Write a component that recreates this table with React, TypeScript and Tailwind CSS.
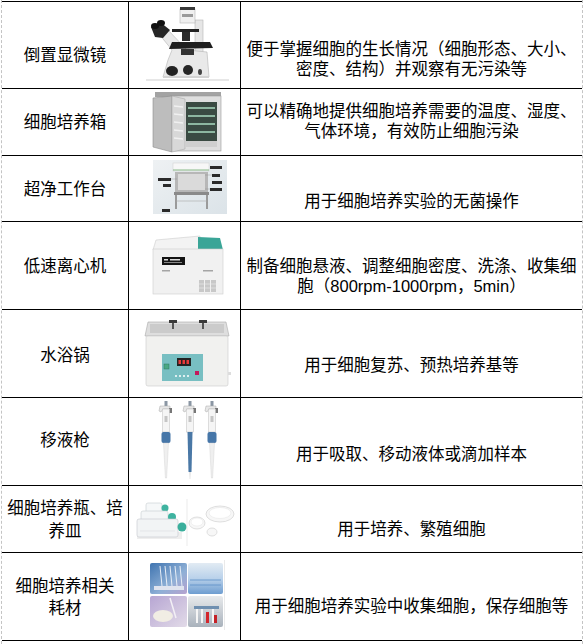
import React from 'react';

type Row = {
  top: number;
  h: number;
  rowClass: string;
  name: string[];
  nameClass: string;
  desc: string[];
  descClass: string;
  Pic: React.FC;
};

const Microscope: React.FC = () => (
  <g>
    <line x1="146" y1="80" x2="229" y2="80" stroke="#cfcfcf" strokeWidth="1.2" />
    <rect x="195" y="20" width="8" height="56" fill="#e6e6e6" stroke="#b5b5b5" strokeWidth="0.6" />
    <rect x="180" y="9" width="15" height="14" fill="#f0f0f0" stroke="#b5b5b5" strokeWidth="0.6" />
    <rect x="180" y="7" width="15" height="3" fill="#3a3a3a" />
    <rect x="182" y="14" width="11" height="3" fill="#9a9a9a" />
    <rect x="172" y="29" width="27" height="3" fill="#222" />
    <rect x="182" y="32" width="8" height="9" fill="#2b2b2b" />
    <polygon points="159,34 168,30 187,50 207,52 209,77 163,77 168,60 172,50" fill="#e9e9e9" stroke="#b3b3b3" strokeWidth="0.6" />
    <polygon points="172,42 210,42 213,48 169,49" fill="#1e1e1e" />
    <polygon points="151,27 160,22 170,30 163,38 155,37" fill="#262626" />
    <ellipse cx="155" cy="26" rx="4" ry="3" fill="#111" />
    <ellipse cx="161" cy="23" rx="4" ry="3" fill="#111" />
    <rect x="181" y="49" width="13" height="6" fill="#333" />
    <ellipse cx="172" cy="71" rx="6" ry="5" fill="#222" />
    <ellipse cx="188" cy="70" rx="5" ry="5" fill="#262626" />
    <ellipse cx="200" cy="72" rx="2" ry="3" fill="#444" />
    <rect x="163" y="76" width="46" height="2" fill="#d3d3d3" />
  </g>
);

const Incubator: React.FC = () => (
  <g>
    <rect x="155" y="92" width="66" height="5" fill="#a3a3a3" />
    <rect x="170" y="96" width="51" height="55" fill="#dedede" stroke="#9a9a9a" strokeWidth="0.6" />
    <rect x="186" y="102" width="31" height="39" fill="#3a4a42" />
    <line x1="188" y1="108" x2="215" y2="108" stroke="#a3d1b8" strokeWidth="1.6" />
    <line x1="188" y1="116" x2="215" y2="116" stroke="#a3d1b8" strokeWidth="1.6" />
    <line x1="188" y1="124" x2="215" y2="124" stroke="#a3d1b8" strokeWidth="1.6" />
    <line x1="188" y1="132" x2="215" y2="132" stroke="#a3d1b8" strokeWidth="1.6" />
    <rect x="186" y="141" width="31" height="6" fill="#cfcfcf" />
    <polygon points="153,98 172,96 172,152 153,147" fill="#bdbdbd" stroke="#8d8d8d" strokeWidth="0.6" />
    <polygon points="172,96 185,99 185,149 172,152" fill="#d8d8d8" stroke="#a0a0a0" strokeWidth="0.5" />
    <line x1="174" y1="106" x2="183" y2="107" stroke="#f0f0f0" strokeWidth="1.4" />
    <line x1="174" y1="114" x2="183" y2="115" stroke="#f0f0f0" strokeWidth="1.4" />
    <line x1="174" y1="122" x2="183" y2="123" stroke="#f0f0f0" strokeWidth="1.4" />
    <line x1="174" y1="130" x2="183" y2="131" stroke="#f0f0f0" strokeWidth="1.4" />
    <line x1="174" y1="138" x2="183" y2="139" stroke="#f0f0f0" strokeWidth="1.4" />
  </g>
);

const Tag: React.FC<{ x: number; y: number; w: number }> = ({ x, y, w }) => (
  <rect x={x} y={y} width={w} height="3" fill="#2a2a2a" />
);

const CleanBench: React.FC = () => (
  <g>
    <defs>
      <linearGradient id="cb" x1="0" y1="0" x2="1" y2="1">
        <stop offset="0" stopColor="#eef1f3" />
        <stop offset="1" stopColor="#dbe3e8" />
      </linearGradient>
    </defs>
    <rect x="153" y="160" width="74" height="54" fill="url(#cb)" />
    <rect x="173" y="163" width="36" height="8" fill="#f7f7f7" stroke="#d0d0d0" strokeWidth="0.5" />
    <line x1="173" y1="170" x2="209" y2="170" stroke="#6aa86a" strokeWidth="0.8" />
    <rect x="175" y="172" width="33" height="20" fill="#b7b7b7" />
    <rect x="178" y="174" width="27" height="16" fill="#dadada" />
    <rect x="174" y="192" width="35" height="3" fill="#8a8a8a" />
    <rect x="175" y="195" width="2" height="14" fill="#9a9a9a" />
    <rect x="206" y="195" width="2" height="14" fill="#9a9a9a" />
    <line x1="176" y1="201" x2="207" y2="201" stroke="#aaa" strokeWidth="0.6" />
    <Tag x={210} y={166} w={12} />
    <Tag x={212} y={174} w={8} />
    <Tag x={212} y={181} w={10} />
    <Tag x={210} y={188} w={12} />
    <Tag x={158} y={178} w={13} />
    <Tag x={163} y={184} w={8} />
    <Tag x={162} y={209} w={8} />
    <line x1="171" y1="179" x2="177" y2="179" stroke="#888" strokeWidth="0.4" />
    <line x1="205" y1="175" x2="212" y2="175" stroke="#888" strokeWidth="0.4" />
    <line x1="205" y1="189" x2="210" y2="189" stroke="#888" strokeWidth="0.4" />
  </g>
);

const Centrifuge: React.FC = () => (
  <g>
    <polygon points="156,240 200,236 200,250 153,250" fill="#f3f3f3" stroke="#cdcdcd" strokeWidth="0.6" />
    <polygon points="198,237 220,238 223,250 198,250" fill="#3aa597" />
    <rect x="153" y="249" width="70" height="45" fill="#f1f1f1" stroke="#cdcdcd" strokeWidth="0.6" />
    <rect x="162" y="257" width="23" height="8" fill="#141414" />
    <rect x="164" y="259" width="4" height="1.5" fill="#ddd" />
    <rect x="170" y="259" width="10" height="1.5" fill="#ddd" />
    <rect x="164" y="262" width="18" height="1" fill="#888" />
    <rect x="162" y="270" width="8" height="1.5" fill="#a5a5a5" />
    <rect x="203" y="270" width="10" height="1.5" fill="#a5a5a5" />
    <rect x="199" y="280" width="5" height="12" fill="#c8c8c8" />
    <rect x="205" y="280" width="5" height="12" fill="#c8c8c8" />
    <rect x="211" y="280" width="5" height="12" fill="#c8c8c8" />
    <line x1="199" y1="284" x2="216" y2="284" stroke="#eee" strokeWidth="0.6" />
    <line x1="199" y1="288" x2="216" y2="288" stroke="#eee" strokeWidth="0.6" />
  </g>
);

const WaterBath: React.FC = () => (
  <g>
    <polygon points="148,322 226,322 229,336 145,336" fill="#dedede" stroke="#a9a9a9" strokeWidth="0.6" />
    <rect x="150" y="324" width="74" height="9" fill="#cbcbcb" />
    <rect x="172" y="322" width="2" height="7" fill="#555" />
    <rect x="169" y="320" width="8" height="3" fill="#3a3a3a" />
    <rect x="202" y="322" width="2" height="7" fill="#555" />
    <rect x="199" y="320" width="8" height="3" fill="#3a3a3a" />
    <rect x="146" y="336" width="82" height="50" rx="2" fill="#f1f1ef" stroke="#c9c9c9" strokeWidth="0.6" />
    <rect x="162" y="354" width="41" height="27" fill="#78bfc2" />
    <rect x="177" y="358" width="14" height="8" fill="#232323" />
    <rect x="178.5" y="360" width="2.5" height="4" fill="#e53a3a" />
    <rect x="182.5" y="360" width="2.5" height="4" fill="#e53a3a" />
    <rect x="186.5" y="360" width="2.5" height="4" fill="#e53a3a" />
    <rect x="164" y="364" width="5" height="5" fill="#4aa884" stroke="#2d7760" strokeWidth="0.5" />
    <rect x="195" y="371" width="4" height="4" fill="#c2185b" />
    <circle cx="176" cy="376" r="1" fill="#fff" />
    <circle cx="180" cy="376" r="1" fill="#fff" />
    <circle cx="184" cy="376" r="1" fill="#fff" />
    <circle cx="188" cy="376" r="1" fill="#fff" />
    <rect x="228" y="372" width="3" height="3" fill="#ddd" />
  </g>
);

const Pipette: React.FC<{ cx: number; long?: boolean }> = ({ cx, long }) => (
  <g>
    <rect x={cx - 1.5} y="401" width="3" height="5" fill="#8a96a3" />
    <path d={`M${cx - 6} ${406} L${cx + 4} ${406} L${cx + 4} ${409} L${cx - 3} ${409} L${cx - 5} ${412} L${cx - 7} ${411} Z`} fill="#e8e8e8" stroke="#a8a8a8" strokeWidth="0.5" />
    <rect x={cx + 3} y="408" width="3" height="5" fill="#777" />
    <rect x={cx - 3.5} y="409" width="7" height="23" fill="#f5f5f5" stroke="#bdbdbd" strokeWidth="0.5" />
    <rect x={cx - 1.5} y="416" width="3" height="6" fill="#c5c5c5" />
    {long ? (
      <>
        <polygon points={`${cx - 2.5},432 ${cx + 2.5},432 ${cx + 1.5},472 ${cx - 1.5},472`} fill="#4a78a6" />
        <polygon points={`${cx - 1},472 ${cx + 1},472 ${cx + 0.4},479 ${cx - 0.4},479`} fill="#e6e6e6" />
      </>
    ) : (
      <>
        <rect x={cx - 4.5} y="432" width="9" height="11" rx="2" fill="#4676a8" />
        <polygon points={`${cx - 2.5},443 ${cx + 2.5},443 ${cx + 0.6},478 ${cx - 0.6},478`} fill="#efefef" stroke="#cfcfcf" strokeWidth="0.4" />
      </>
    )}
  </g>
);

const Pipettes: React.FC = () => (
  <g>
    <Pipette cx={166} />
    <Pipette cx={190} long />
    <Pipette cx={212} />
  </g>
);

const Flasks: React.FC = () => (
  <g>
    <rect x="137" y="532" width="45" height="7" fill="#eeeeee" />
    <rect x="146" y="503" width="16" height="11" rx="2" fill="#f6f8f9" stroke="#c8ccd0" strokeWidth="0.6" />
    <circle cx="165" cy="508" r="3.5" fill="#3fb3a0" />
    <rect x="141" y="511" width="27" height="12" rx="2" fill="#f4f6f7" stroke="#c8ccd0" strokeWidth="0.6" />
    <circle cx="172" cy="517" r="4" fill="#3fb3a0" />
    <rect x="137" y="519" width="41" height="18" rx="2" fill="#f2f4f5" stroke="#c4c8cc" strokeWidth="0.6" />
    <circle cx="182" cy="527" r="4.5" fill="#3aaf9c" />
    <line x1="140" y1="531" x2="175" y2="531" stroke="#d8dcdf" strokeWidth="0.6" />
    <line x1="187" y1="499" x2="187" y2="546" stroke="#dedede" strokeWidth="0.6" />
    <ellipse cx="220" cy="514" rx="14" ry="8" fill="#f7f7f7" stroke="#d2d2d2" strokeWidth="0.7" />
    <ellipse cx="220" cy="513" rx="11" ry="5.5" fill="#fff" stroke="#e2e2e2" strokeWidth="0.5" />
    <ellipse cx="197" cy="523" rx="8" ry="6" fill="#f7f7f7" stroke="#d2d2d2" strokeWidth="0.7" />
    <ellipse cx="197" cy="522" rx="6" ry="4" fill="#fff" stroke="#e2e2e2" strokeWidth="0.5" />
    <ellipse cx="212" cy="532" rx="5" ry="4" fill="#f7f7f7" stroke="#d2d2d2" strokeWidth="0.7" />
  </g>
);

const Collage: React.FC = () => (
  <g>
    <defs>
      <linearGradient id="tl" x1="0" y1="0" x2="1" y2="1">
        <stop offset="0" stopColor="#3f74b0" />
        <stop offset="0.6" stopColor="#8fb0d6" />
        <stop offset="1" stopColor="#b7a2cf" />
      </linearGradient>
      <linearGradient id="tr" x1="0" y1="0" x2="0" y2="1">
        <stop offset="0" stopColor="#e2ebf3" />
        <stop offset="0.5" stopColor="#b9d1ea" />
        <stop offset="1" stopColor="#6e9dd0" />
      </linearGradient>
      <linearGradient id="bl" x1="0" y1="0" x2="1" y2="1">
        <stop offset="0" stopColor="#b7a6d3" />
        <stop offset="1" stopColor="#e2dbe8" />
      </linearGradient>
      <linearGradient id="br" x1="0" y1="0" x2="0" y2="1">
        <stop offset="0" stopColor="#e8eaec" />
        <stop offset="1" stopColor="#a9b2bc" />
      </linearGradient>
    </defs>
    <rect x="150" y="563" width="37" height="31" rx="2" fill="url(#tl)" />
    <line x1="160" y1="566" x2="162" y2="586" stroke="#e8eef6" strokeWidth="1" />
    <line x1="165" y1="566" x2="167" y2="586" stroke="#e8eef6" strokeWidth="1" />
    <line x1="170" y1="566" x2="172" y2="586" stroke="#e8eef6" strokeWidth="1" />
    <line x1="175" y1="566" x2="177" y2="586" stroke="#e8eef6" strokeWidth="1" />
    <line x1="180" y1="566" x2="182" y2="586" stroke="#e8eef6" strokeWidth="1" />
    <rect x="154" y="586" width="30" height="4" fill="#dfe3ee" />
    <rect x="188" y="563" width="35" height="31" rx="2" fill="url(#tr)" />
    <line x1="190" y1="580" x2="221" y2="580" stroke="#5d8fc8" strokeWidth="0.8" />
    <line x1="190" y1="585" x2="221" y2="585" stroke="#5d8fc8" strokeWidth="0.8" />
    <rect x="150" y="596" width="37" height="31" rx="2" fill="url(#bl)" />
    <ellipse cx="163" cy="616" rx="10" ry="6" fill="#f1ede4" />
    <line x1="170" y1="598" x2="176" y2="618" stroke="#f3f0f5" strokeWidth="1.5" />
    <rect x="188" y="596" width="35" height="31" rx="2" fill="url(#br)" />
    <rect x="194" y="606" width="25" height="3" fill="#6f8fb0" />
    <rect x="196" y="609" width="2" height="14" fill="#f5f5f5" />
    <rect x="201" y="609" width="2" height="14" fill="#f5f5f5" />
    <rect x="206" y="612" width="3" height="11" fill="#d3262c" />
    <rect x="212" y="609" width="2" height="14" fill="#f5f5f5" />
    <rect x="214" y="615" width="3" height="8" fill="#c42127" />
    <line x1="224.5" y1="560" x2="224.5" y2="630" stroke="#dcdcdc" strokeWidth="0.6" />
  </g>
);

const ROWS: Row[] = [
  {
    top: 1, h: 87, rowClass: 'h-[87px]',
    name: ['倒置显微镜'], nameClass: 'pt-[20px]',
    desc: ['便于掌握细胞的生长情况（细胞形态、大小、', '密度、结构）并观察有无污染等'], descClass: 'pt-[27px]',
    Pic: Microscope,
  },
  {
    top: 88, h: 67, rowClass: 'h-[67px]',
    name: ['细胞培养箱'], nameClass: '',
    desc: ['可以精确地提供细胞培养需要的温度、湿度、', '气体环境，有效防止细胞污染'], descClass: 'pb-[3px]',
    Pic: Incubator,
  },
  {
    top: 155, h: 66, rowClass: 'h-[66px]',
    name: ['超净工作台'], nameClass: '',
    desc: ['用于细胞培养实验的无菌操作'], descClass: 'pt-[24px]',
    Pic: CleanBench,
  },
  {
    top: 221, h: 88, rowClass: 'h-[88px]',
    name: ['低速离心机'], nameClass: '',
    desc: ['制备细胞悬液、调整细胞密度、洗涤、收集细', '胞（800rpm-1000rpm，5min）'], descClass: 'pt-[20px]',
    Pic: Centrifuge,
  },
  {
    top: 309, h: 88, rowClass: 'h-[88px]',
    name: ['水浴锅'], nameClass: 'pt-[2px]',
    desc: ['用于细胞复苏、预热培养基等'], descClass: 'pt-[22px]',
    Pic: WaterBath,
  },
  {
    top: 397, h: 88, rowClass: 'h-[88px]',
    name: ['移液枪'], nameClass: 'pb-[3px]',
    desc: ['用于吸取、移动液体或滴加样本'], descClass: 'pt-[24px]',
    Pic: Pipettes,
  },
  {
    top: 485, h: 67, rowClass: 'h-[67px]',
    name: ['细胞培养瓶、培', '养皿'], nameClass: 'pt-[2px] leading-[23px]',
    desc: ['用于培养、繁殖细胞'], descClass: 'pt-[19px]',
    Pic: Flasks,
  },
  {
    top: 552, h: 88, rowClass: 'h-[88px]',
    name: ['细胞培养相关', '耗材'], nameClass: 'leading-[22px]',
    desc: ['用于细胞培养实验中收集细胞，保存细胞等'], descClass: 'pt-[19px]',
    Pic: Collage,
  },
];

const App: React.FC = () => {
  return (
    <div className="w-[588px] h-[644px] bg-white text-black font-['Liberation_Sans','Noto_Sans_CJK_SC',sans-serif] text-[16.5px]">
      <div className="ml-px w-[582px] h-[644px] border-x border-dashed border-[#c4c4c4] pt-px">
        <div className="flex flex-col border-b border-black">
          {ROWS.map((r) => (
            <div key={r.top} className={`grid grid-cols-[127px_112px_1fr] border-t border-black ${r.rowClass}`}>
              {/* name */}
              <div className={`border-r border-black flex flex-col items-center justify-center text-center leading-[20px] whitespace-nowrap ${r.nameClass}`}>
                {r.name.map((l) => (
                  <div key={l}>{l}</div>
                ))}
              </div>
              {/* picture */}
              <div className="border-r border-black overflow-hidden">
                <svg
                  width="111"
                  height={r.h - 1}
                  viewBox={`129 ${r.top + 1} 111 ${r.h - 1}`}
                  className="block"
                >
                  <r.Pic />
                </svg>
              </div>
              {/* description */}
              <div className={`flex flex-col items-center justify-center text-center leading-[20px] whitespace-nowrap ${r.descClass}`}>
                {r.desc.map((l) => (
                  <div key={l}>{l}</div>
                ))}
              </div>
            </div>
          ))}
        </div>
      </div>
    </div>
  );
};

export default App;
